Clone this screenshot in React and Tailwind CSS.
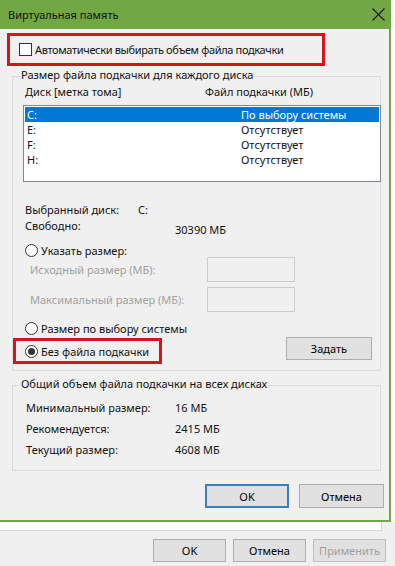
const GREEN = 'bg-[#72a844]'

function Radio({ checked }) {
  return (
    <span className="w-[13px] h-[13px] rounded-full border border-[#333333] bg-white flex items-center justify-center shrink-0">
      {checked && <span className="w-[7px] h-[7px] rounded-full bg-[#333333]" />}
    </span>
  )
}

function Button({ children, primary, disabled, className = '' }) {
  return (
    <div
      className={
        'flex items-center justify-center bg-[#e1e1e1] ' +
        (primary ? 'border-2 border-[#3a7fbf] ' : 'border border-[#adadad] ') +
        (disabled ? 'text-[#a0a0a0] bg-[#cccccc] border-[#bfbfbf] ' : 'text-black ') +
        className
      }
    >
      {children}
    </div>
  )
}

const drives = [
  ['C:', 'По выбору системы', true],
  ['E:', 'Отсутствует'],
  ['F:', 'Отсутствует'],
  ['H:', 'Отсутствует'],
]

const totals = [
  ['Минимальный размер:', '16 МБ'],
  ['Рекомендуется:', '2415 МБ'],
  ['Текущий размер:', '4608 МБ'],
]

export default function App() {
  return (
    <div className="w-[395px] h-[566px] overflow-hidden bg-[#f0f0f0] text-[11px] leading-[15px] text-[#111] whitespace-nowrap font-['Noto_Sans','Open_Sans',sans-serif]">
      <div className="flex">
        <div className="w-[391px] h-[522px] border-r-2 border-b-2 border-[#72a844] flex flex-col bg-[#f0f0f0]">
          {/* title bar */}
          <div className={`h-[29px] ${GREEN} flex items-center justify-between pl-[8px] pr-[4px] shrink-0`}>
            <span className="text-[#111]">Виртуальная память</span>
            <svg width="13" height="13" viewBox="0 0 13 13">
              <path d="M0.5 0.5 L12.5 12.5 M12.5 0.5 L0.5 12.5" stroke="#1a1a1a" strokeWidth="1.1" />
            </svg>
          </div>

          {/* auto checkbox */}
          <div className="mt-[4px] ml-[7px] w-[318px] h-[33px] border-[3px] border-[#d7141d] flex items-center pl-[9px] gap-[3px]">
            <span className="w-[13px] h-[13px] border border-[#333333] bg-white shrink-0" />
            <span className="tracking-[-0.35px]">Автоматически выбирать объем файла подкачки</span>
          </div>

          {/* group 1 */}
          <div className="mt-[10px] ml-[12px] w-[369px] h-[295px] border border-[#dcdcdc] flex flex-col shrink-0">
            <div className="-mt-[10px] ml-[7px] px-[1px] bg-[#f0f0f0] w-fit leading-[16px]">
              Размер файла подкачки для каждого диска
            </div>
            <div className="mt-[1px] h-[16px] leading-[16px] flex pl-[12px]">
              <span className="w-[180px]">Диск [метка тома]</span>
              <span>Файл подкачки (МБ)</span>
            </div>
            <div className="mt-[5px] ml-[10px] w-[358px] h-[77px] border border-[#828790] bg-white p-[1px]">
              {drives.map(([d, v, sel]) => (
                <div key={d} className={'h-[15px] flex pl-[2px] ' + (sel ? 'bg-[#0078d7] text-white' : '')}>
                  <span className="w-[214px]">{d}</span>
                  <span>{v}</span>
                </div>
              ))}
            </div>

            <div className="mt-[20px] h-[15px] flex pl-[12px]">
              <span className="w-[113px]">Выбранный диск:</span>
              <span>C:</span>
            </div>
            <div className="mt-[1px] h-[15px] flex pl-[12px]">
              <span className="w-[150px]">Свободно:</span>
              <span className="mt-[4px]">30390 МБ</span>
            </div>

            <div className="mt-[10px] h-[15px] flex items-center pl-[12px] gap-[3px]">
              <Radio />
              <span>Указать размер:</span>
            </div>
            <div className="-mt-[1px] h-[25px] flex items-center pl-[17px] text-[#a0a0a0]">
              <span className="w-[177px]">Исходный размер (МБ):</span>
              <span className="w-[88px] h-[25px] border border-[#cccccc] bg-[#f0f0f0]" />
            </div>
            <div className="mt-[5px] h-[25px] flex items-center pl-[17px] text-[#a0a0a0]">
              <span className="w-[177px]">Максимальный размер (МБ):</span>
              <span className="w-[88px] h-[25px] border border-[#cccccc] bg-[#f0f0f0]" />
            </div>

            <div className="mt-[9px] h-[15px] flex items-center pl-[12px] gap-[3px]">
              <Radio />
              <span>Размер по выбору системы</span>
            </div>
            <div className="mt-[2px] flex items-start">
              <div className="w-[149px] h-[26px] border-[3px] border-[#d7141d] flex items-center pl-[9px] gap-[3px]">
                <Radio checked />
                <span>Без файла подкачки</span>
              </div>
              <Button className="ml-[124px] -mt-[1px] w-[86px] h-[23px]">Задать</Button>
            </div>
          </div>

          {/* group 2 */}
          <div className="mt-[14px] ml-[12px] w-[369px] h-[86px] border border-[#dcdcdc] flex flex-col shrink-0">
            <div className="-mt-[10px] ml-[7px] px-[1px] bg-[#f0f0f0] w-fit leading-[16px]">
              Общий объем файла подкачки на всех дисках
            </div>
            <div className="flex flex-col gap-[6px] pl-[13px] pt-[8px]">
              {totals.map(([l, v]) => (
                <div key={l} className="h-[15px] flex">
                  <span className="w-[149px]">{l}</span>
                  <span>{v}</span>
                </div>
              ))}
            </div>
          </div>

          <div className="mt-[13px] flex pl-[205px] gap-[10px]">
            <Button primary className="w-[84px] h-[24px]">OK</Button>
            <Button className="w-[85px] h-[24px]">Отмена</Button>
          </div>
          <div className="mt-auto h-[8px] bg-[#eef3e8]" />
        </div>
        <div className="flex-1 bg-white" />
      </div>

      {/* parent window */}
      <div className="w-[382px] h-[9px] bg-white border-r border-b border-[#d9d9d9]" />
      <div className="mt-[8px] flex pl-[153px] gap-[7px]">
        <Button className="w-[73px] h-[23px]">OK</Button>
        <Button className="w-[73px] h-[23px]">Отмена</Button>
        <Button disabled className="w-[73px] h-[23px]">Применить</Button>
      </div>
    </div>
  )
}
